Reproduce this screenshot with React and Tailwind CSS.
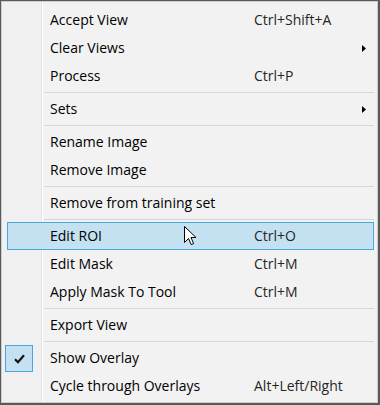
const items = [
  { label: "Accept View", shortcut: "Ctrl+Shift+A" },
  { label: "Clear Views", submenu: true },
  { label: "Process", shortcut: "Ctrl+P" },
  { sep: true },
  { label: "Sets", submenu: true },
  { sep: true },
  { label: "Rename Image" },
  { label: "Remove Image" },
  { sep: true },
  { label: "Remove from training set" },
  { sep: true },
  { label: "Edit ROI", shortcut: "Ctrl+O", active: true },
  { label: "Edit Mask", shortcut: "Ctrl+M" },
  { label: "Apply Mask To Tool", shortcut: "Ctrl+M" },
  { sep: true },
  { label: "Export View" },
  { sep: true },
  { label: "Show Overlay", checked: true },
  { label: "Cycle through Overlays", shortcut: "Alt+Left/Right" },
];

function Cursor() {
  return (
    <svg
      className="absolute left-[176px] top-[3px]"
      width="13"
      height="20"
      viewBox="0 0 13 20"
    >
      <path
        d="M0.5 0.5 L0.5 16.5 L4.5 12.5 L7.2 18.6 L9.6 17.6 L7 11.5 L12 11.5 Z"
        fill="#fff"
        stroke="#000"
        strokeWidth="1"
      />
    </svg>
  );
}

function Row({ item }) {
  return (
    <div
      className={
        "relative ml-[5px] mr-[3px] h-[28px] flex items-center border pl-[42px] pr-[7px] " +
        (item.active ? "bg-[#c4e1f2] border-[#4ba6e0]" : "border-transparent")
      }
    >
      {item.checked && (
        <div className="absolute left-[-3px] top-0 w-[28px] h-[27px] bg-[#c4e1f2] border border-[#4ba6e0] flex items-center justify-center">
          <svg width="11" height="10" viewBox="0 0 11 10">
            <path
              d="M1 5.2 L4 8.2 L10 1.2"
              fill="none"
              stroke="#111"
              strokeWidth="2.2"
            />
          </svg>
        </div>
      )}
      <span className="w-[204px] shrink-0 whitespace-nowrap text-black">
        {item.label}
      </span>
      <span className="flex-1 whitespace-nowrap text-[#262626]">
        {item.shortcut}
      </span>
      {item.submenu && (
        <svg width="4" height="7" viewBox="0 0 4 7">
          <path d="M0 0 L4 3.5 L0 7 Z" fill="#000" />
        </svg>
      )}
      {item.active && <Cursor />}
    </div>
  );
}

export default function App() {
  return (
    <div className="w-[380px] h-[405px] border-l border-t border-r-2 border-b-2 border-[#5a5a5a] bg-white">
      <div
        className="h-full border border-[#cdcdcd] pt-[4px] text-[14px] leading-none bg-[linear-gradient(to_right,#f0f0f0_39px,#e3e3e3_39px,#e3e3e3_40px,#ffffff_40px,#ffffff_41px,#f2f2f2_41px)]"
        style={{ fontFamily: '"Open Sans", "Noto Sans", sans-serif' }}
      >
        {items.map((item, i) =>
          item.sep ? (
            <div key={i} className="h-[5px] flex items-center pl-[42px] pr-[3px]">
              <div className="h-px w-full bg-[#d7d7d7]" />
            </div>
          ) : (
            <Row key={i} item={item} />
          )
        )}
      </div>
    </div>
  );
}
